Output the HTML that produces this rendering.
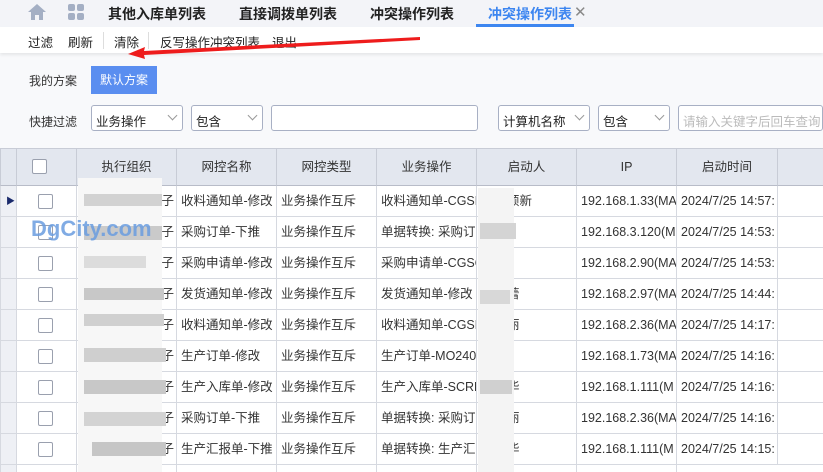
<!DOCTYPE html>
<html><head><meta charset="utf-8">
<style>
*{margin:0;padding:0;box-sizing:border-box}
html,body{width:823px;height:472px;overflow:hidden}
body{background:#f8f9fb;font-family:"Liberation Sans","Noto Sans CJK SC",sans-serif;font-size:12px;color:#333;position:relative}
.abs{position:absolute}
.tabs{left:0;top:0;width:823px;height:27px;background:#f3f4f8}
.tab{position:absolute;top:4px;font-size:14px;font-weight:bold;color:#222}
.tool{left:0;top:27px;width:823px;height:26px;background:#fff;box-shadow:0 2px 3px rgba(0,0,0,.08)}
.tool span{position:absolute;top:5px;font-size:12.5px;color:#222}
.sel{position:absolute;height:26px;border:1px solid #a8b0c4;border-radius:3px;background:#fff;font-size:12.5px;padding:5px 4px;color:#222;white-space:nowrap;overflow:hidden}
.sel i{position:absolute;right:6px;top:6px;width:7px;height:7px;border-right:1px solid #999;border-bottom:1px solid #999;transform:rotate(45deg)}
.tbl{left:0;top:148px;width:823px;height:324px;background:#fff;overflow:hidden}
.hd{position:absolute;top:0;height:38px;background:#e3e7ef;border-left:1px solid #c8ccd6;border-top:1px solid #c8ccd6;border-bottom:1px solid #b8bcc8;text-align:center;line-height:36px;font-size:12.5px;color:#333}
.row{position:absolute;left:0;width:823px;height:31px;border-bottom:1px solid #d6d9e0;overflow:hidden}
.c{position:absolute;top:0;height:31px;line-height:31px;border-left:1px solid #d6d9e0;white-space:nowrap;overflow:hidden;padding-left:4px;font-size:12.5px;color:#333}
.cb{position:absolute;left:21px;top:8px;width:15px;height:15px;border:1px solid #9aa0ae;border-radius:2px;background:#fff}
.blur{position:absolute;background:#d4d4d4}
</style></head><body>
<div class="abs tabs">
<svg class="abs" style="left:27px;top:3px" width="20" height="18" viewBox="0 0 20 18"><path d="M10 1 L1 9 H4 V17 H8 V12 H12 V17 H16 V9 H19 Z" fill="#a4afc4"/></svg>
<svg class="abs" style="left:67px;top:3px" width="18" height="18" viewBox="0 0 18 18"><rect x="1" y="1" width="7" height="7" rx="2" fill="#a4afc4"/><rect x="10" y="1" width="7" height="7" rx="2" fill="#a4afc4"/><rect x="1" y="10" width="7" height="7" rx="2" fill="#a4afc4"/><rect x="10" y="10" width="7" height="7" rx="2" fill="#a4afc4"/></svg>
<span class="tab" style="left:108px">其他入库单列表</span>
<span class="tab" style="left:239px">直接调拨单列表</span>
<span class="tab" style="left:370px">冲突操作列表</span>
<span class="tab" style="left:488px;color:#3d86f0">冲突操作列表</span>
<span class="tab" style="left:574px;color:#888;font-weight:normal;font-size:15px;top:3px">✕</span>
<div class="abs" style="left:476px;top:24px;width:98px;height:3px;background:#3d86f0"></div>
</div>
<div class="abs tool">
<span style="left:28px">过滤</span><span style="left:68px">刷新</span>
<div class="abs" style="left:103px;top:5px;width:1px;height:17px;background:#ddd"></div>
<span style="left:114px">清除</span>
<div class="abs" style="left:148px;top:5px;width:1px;height:17px;background:#ddd"></div>
<span style="left:160px">反写操作冲突列表</span><span style="left:272px">退出</span>
</div>
<svg class="abs" style="left:0;top:0" width="823" height="80"><polygon points="128,54 145,47 144,51 420,37 420,40 144,55 145,59" fill="#ee1c1c"/></svg>
<span class="abs" style="left:29px;top:72px;color:#333">我的方案</span>
<div class="abs" style="left:91px;top:66px;width:66px;height:28px;background:#5a8ef0;color:#fff;line-height:28px;text-align:center">默认方案</div>
<span class="abs" style="left:29px;top:113px;color:#333">快捷过滤</span>
<div class="sel" style="left:91px;top:105px;width:92px">业务操作<i></i></div>
<div class="sel" style="left:191px;top:105px;width:72px">包含<i></i></div>
<div class="sel" style="left:271px;top:105px;width:207px"></div>
<div class="sel" style="left:498px;top:105px;width:92px">计算机名称<i></i></div>
<div class="sel" style="left:598px;top:105px;width:72px">包含<i></i></div>
<div class="sel" style="left:678px;top:105px;width:145px;color:#bbb">请输入关键字后回车查询</div>
<div class="abs tbl">
<div class="hd" style="left:0;width:16px"></div>
<div class="hd" style="left:16px;width:60px"><div class="cb" style="left:15px;top:10px"></div></div>
<div class="hd" style="left:76px;width:100px">执行组织</div>
<div class="hd" style="left:176px;width:100px">网控名称</div>
<div class="hd" style="left:276px;width:100px">网控类型</div>
<div class="hd" style="left:376px;width:100px">业务操作</div>
<div class="hd" style="left:476px;width:100px">启动人</div>
<div class="hd" style="left:576px;width:100px">IP</div>
<div class="hd" style="left:676px;width:101px">启动时间</div>
<div class="hd" style="left:777px;width:46px;border-right:none"></div>

<div class="row" style="top:38px"><div class="c" style="left:0;width:16px;background:#eef0f5"><span style="color:#1a2a6c;font-size:9px;position:absolute;left:5px;top:0">▶</span></div><div class="c" style="left:16px;width:60px"><div class="cb"></div></div><div class="c" style="left:76px;width:100px;text-align:right;padding-right:2px">子</div><div class="c" style="left:176px;width:100px">收料通知单-修改</div><div class="c" style="left:276px;width:100px">业务操作互斥</div><div class="c" style="left:376px;width:100px">收料通知单-CGSL</div><div class="c" style="left:476px;width:100px;padding-left:30px">颍新</div><div class="c" style="left:576px;width:100px">192.168.1.33(MA</div><div class="c" style="left:676px;width:101px">2024/7/25 14:57:</div><div class="c" style="left:777px;width:46px"></div></div>
<div class="row" style="top:69px"><div class="c" style="left:0;width:16px;background:#eef0f5"></div><div class="c" style="left:16px;width:60px"><div class="cb"></div></div><div class="c" style="left:76px;width:100px;text-align:right;padding-right:2px">子</div><div class="c" style="left:176px;width:100px">采购订单-下推</div><div class="c" style="left:276px;width:100px">业务操作互斥</div><div class="c" style="left:376px;width:100px">单据转换: 采购订单</div><div class="c" style="left:476px;width:100px"></div><div class="c" style="left:576px;width:100px">192.168.3.120(M</div><div class="c" style="left:676px;width:101px">2024/7/25 14:53:</div><div class="c" style="left:777px;width:46px"></div></div>
<div class="row" style="top:100px"><div class="c" style="left:0;width:16px;background:#eef0f5"></div><div class="c" style="left:16px;width:60px"><div class="cb"></div></div><div class="c" style="left:76px;width:100px;text-align:right;padding-right:2px">子</div><div class="c" style="left:176px;width:100px">采购申请单-修改</div><div class="c" style="left:276px;width:100px">业务操作互斥</div><div class="c" style="left:376px;width:100px">采购申请单-CGSQ</div><div class="c" style="left:476px;width:100px"></div><div class="c" style="left:576px;width:100px">192.168.2.90(MA</div><div class="c" style="left:676px;width:101px">2024/7/25 14:53:</div><div class="c" style="left:777px;width:46px"></div></div>
<div class="row" style="top:131px"><div class="c" style="left:0;width:16px;background:#eef0f5"></div><div class="c" style="left:16px;width:60px"><div class="cb"></div></div><div class="c" style="left:76px;width:100px;text-align:right;padding-right:2px">子</div><div class="c" style="left:176px;width:100px">发货通知单-修改</div><div class="c" style="left:276px;width:100px">业务操作互斥</div><div class="c" style="left:376px;width:100px">发货通知单-修改</div><div class="c" style="left:476px;width:100px;padding-left:30px">蕾</div><div class="c" style="left:576px;width:100px">192.168.2.97(MA</div><div class="c" style="left:676px;width:101px">2024/7/25 14:44:</div><div class="c" style="left:777px;width:46px"></div></div>
<div class="row" style="top:162px"><div class="c" style="left:0;width:16px;background:#eef0f5"></div><div class="c" style="left:16px;width:60px"><div class="cb"></div></div><div class="c" style="left:76px;width:100px;text-align:right;padding-right:2px">子</div><div class="c" style="left:176px;width:100px">收料通知单-修改</div><div class="c" style="left:276px;width:100px">业务操作互斥</div><div class="c" style="left:376px;width:100px">收料通知单-CGSL</div><div class="c" style="left:476px;width:100px;padding-left:30px">丽</div><div class="c" style="left:576px;width:100px">192.168.2.36(MA</div><div class="c" style="left:676px;width:101px">2024/7/25 14:17:</div><div class="c" style="left:777px;width:46px"></div></div>
<div class="row" style="top:193px"><div class="c" style="left:0;width:16px;background:#eef0f5"></div><div class="c" style="left:16px;width:60px"><div class="cb"></div></div><div class="c" style="left:76px;width:100px;text-align:right;padding-right:2px">子</div><div class="c" style="left:176px;width:100px">生产订单-修改</div><div class="c" style="left:276px;width:100px">业务操作互斥</div><div class="c" style="left:376px;width:100px">生产订单-MO240</div><div class="c" style="left:476px;width:100px"></div><div class="c" style="left:576px;width:100px">192.168.1.73(MA</div><div class="c" style="left:676px;width:101px">2024/7/25 14:16:</div><div class="c" style="left:777px;width:46px"></div></div>
<div class="row" style="top:224px"><div class="c" style="left:0;width:16px;background:#eef0f5"></div><div class="c" style="left:16px;width:60px"><div class="cb"></div></div><div class="c" style="left:76px;width:100px;text-align:right;padding-right:2px">子</div><div class="c" style="left:176px;width:100px">生产入库单-修改</div><div class="c" style="left:276px;width:100px">业务操作互斥</div><div class="c" style="left:376px;width:100px">生产入库单-SCRK</div><div class="c" style="left:476px;width:100px;padding-left:30px">华</div><div class="c" style="left:576px;width:100px">192.168.1.111(M</div><div class="c" style="left:676px;width:101px">2024/7/25 14:16:</div><div class="c" style="left:777px;width:46px"></div></div>
<div class="row" style="top:255px"><div class="c" style="left:0;width:16px;background:#eef0f5"></div><div class="c" style="left:16px;width:60px"><div class="cb"></div></div><div class="c" style="left:76px;width:100px;text-align:right;padding-right:2px">子</div><div class="c" style="left:176px;width:100px">采购订单-下推</div><div class="c" style="left:276px;width:100px">业务操作互斥</div><div class="c" style="left:376px;width:100px">单据转换: 采购订</div><div class="c" style="left:476px;width:100px;padding-left:30px">丽</div><div class="c" style="left:576px;width:100px">192.168.2.36(MA</div><div class="c" style="left:676px;width:101px">2024/7/25 14:16:</div><div class="c" style="left:777px;width:46px"></div></div>
<div class="row" style="top:286px"><div class="c" style="left:0;width:16px;background:#eef0f5"></div><div class="c" style="left:16px;width:60px"><div class="cb"></div></div><div class="c" style="left:76px;width:100px;text-align:right;padding-right:2px">子</div><div class="c" style="left:176px;width:100px">生产汇报单-下推</div><div class="c" style="left:276px;width:100px">业务操作互斥</div><div class="c" style="left:376px;width:100px">单据转换: 生产汇</div><div class="c" style="left:476px;width:100px;padding-left:30px">华</div><div class="c" style="left:576px;width:100px">192.168.1.111(M</div><div class="c" style="left:676px;width:101px">2024/7/25 14:15:</div><div class="c" style="left:777px;width:46px"></div></div>
<div class="row" style="top:317px;height:7px;border-bottom:none"><div class="c" style="left:0;width:16px;height:7px;background:#eef0f5"></div><div class="c" style="left:16px;width:60px;height:7px"></div><div class="c" style="left:76px;width:100px;height:7px"></div><div class="c" style="left:176px;width:100px;height:7px"></div><div class="c" style="left:276px;width:100px;height:7px"></div><div class="c" style="left:376px;width:100px;height:7px"></div><div class="c" style="left:476px;width:100px;height:7px"></div><div class="c" style="left:576px;width:100px;height:7px"></div><div class="c" style="left:676px;width:101px;height:7px"></div></div>

<div class="blur" style="left:78px;top:30px;width:84px;height:294px;background:#f7f7f7"></div>
<div class="blur" style="left:84px;top:46px;width:78px;height:12px;background:#d2d2d2"></div>
<div class="blur" style="left:84px;top:78px;width:78px;height:14px;background:#cacaca"></div>
<div class="blur" style="left:84px;top:140px;width:80px;height:12px;background:#c8c8c8"></div>
<div class="blur" style="left:84px;top:166px;width:80px;height:12px;background:#d0d0d0"></div>
<div class="blur" style="left:84px;top:200px;width:82px;height:14px;background:#cfcfcf"></div>
<div class="blur" style="left:84px;top:232px;width:82px;height:14px;background:#c8c8c8"></div>
<div class="blur" style="left:84px;top:264px;width:82px;height:14px;background:#d3d3d3"></div>
<div class="blur" style="left:92px;top:294px;width:74px;height:14px;background:#c6c6c6"></div>
<div class="blur" style="left:84px;top:108px;width:62px;height:12px;background:#dcdcdc"></div>
<div class="blur" style="left:478px;top:40px;width:36px;height:284px;background:#f4f4f4"></div>
<div class="blur" style="left:480px;top:75px;width:36px;height:16px;background:#d4d4d4"></div>
<div class="blur" style="left:480px;top:142px;width:30px;height:14px;background:#d8d8d8"></div>
<div class="blur" style="left:480px;top:232px;width:32px;height:14px;background:#d0d0d0"></div>
</div>
<div class="abs" style="left:31px;top:216px;font-size:22px;font-weight:bold;color:#6a9de0;opacity:.85">DgCity.com</div>
</body></html>
